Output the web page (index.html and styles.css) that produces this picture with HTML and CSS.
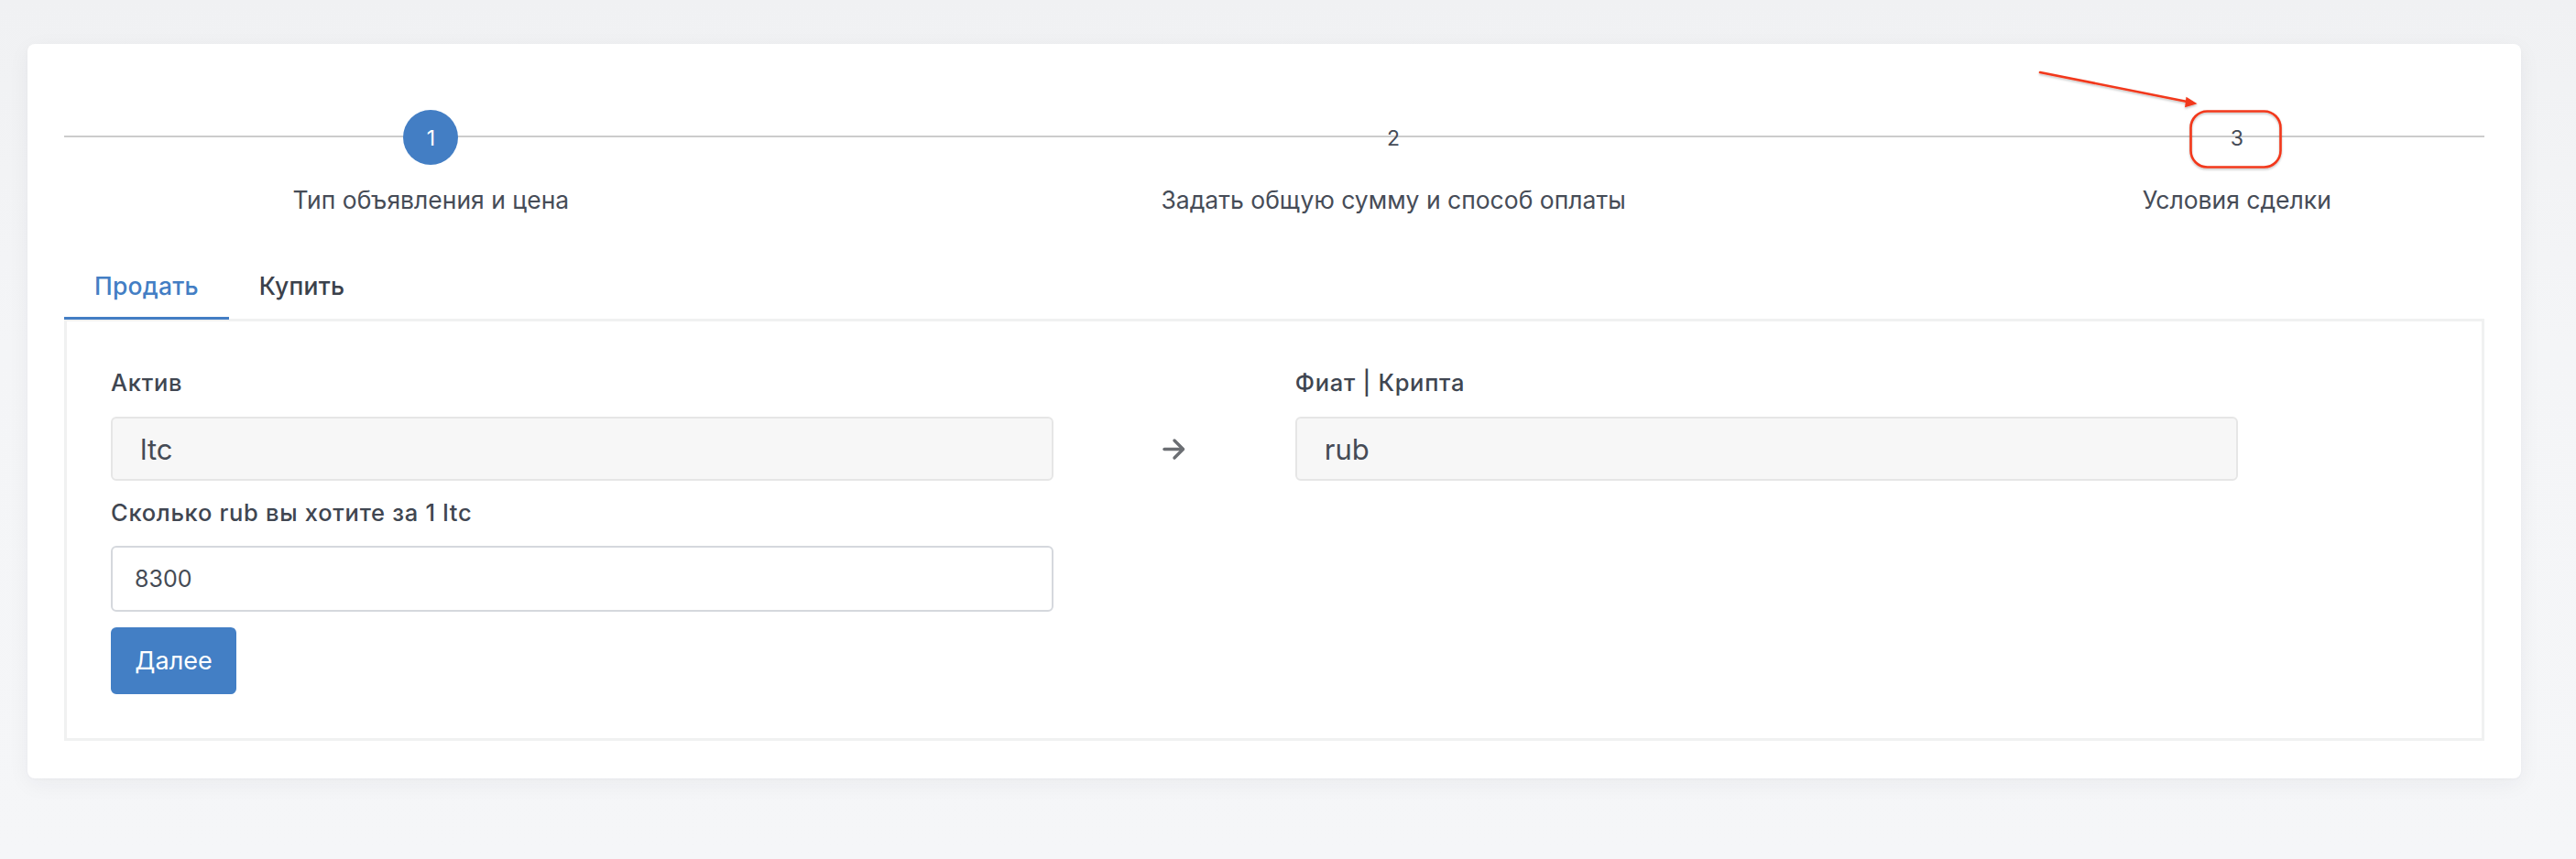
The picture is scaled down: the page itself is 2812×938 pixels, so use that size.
FILE: index.html
```html
<!DOCTYPE html>
<html lang="ru">
<head>
<meta charset="utf-8">
<title>Создание объявления</title>
<link rel="stylesheet" href="styles.css">
</head>
<body>
<div class="page">
  <div class="card">
    <div class="stepper">
      <div class="step active">
        <div class="step-num">1</div>
        <div class="step-label">Тип объявления и цена</div>
      </div>
      <div class="step">
        <div class="step-num">2</div>
        <div class="step-label">Задать общую сумму и способ оплаты</div>
      </div>
      <div class="step">
        <div class="step-num">3</div>
        <div class="step-label">Условия сделки</div>
      </div>
    </div>

    <div class="tabs">
      <div class="tab active">Продать</div>
      <div class="tab">Купить</div>
    </div>

    <div class="panel">
      <div class="form-grid">
        <div class="col">
          <div class="field-label">Актив</div>
          <div class="input readonly">ltc</div>
          <div class="field-label second">Сколько rub вы хотите за 1 ltc</div>
          <input class="input number" type="text" value="8300">
          <button class="btn" type="button">Далее</button>
        </div>
        <div class="arrow-col">
          <svg class="arrow-icon" width="26" height="25" viewBox="0 0 26 25" aria-hidden="true">
            <path d="M2 12.5 H22" stroke="#6b6e73" stroke-width="3.4" stroke-linecap="round" fill="none"/>
            <path d="M13 3 L22.5 12.5 L13 22" stroke="#6b6e73" stroke-width="3.4" stroke-linecap="round" stroke-linejoin="round" fill="none"/>
          </svg>
        </div>
        <div class="col">
          <div class="field-label">Фиат | Крипта</div>
          <div class="input readonly">rub</div>
        </div>
      </div>
    </div>
  </div>

  <svg class="annotation" width="2812" height="938" viewBox="0 0 2812 938" aria-hidden="true">
    <defs>
      <filter id="soft" x="-10%" y="-10%" width="120%" height="130%">
        <feDropShadow dx="0" dy="1.5" stdDeviation="1.2" flood-color="#000" flood-opacity="0.25"/>
      </filter>
    </defs>
    <g filter="url(#soft)">
      <line x1="2227" y1="79" x2="2390" y2="111.5" stroke="#f2381b" stroke-width="2.6" stroke-linecap="round"/>
      <path d="M2386.5 105.8 L2398.5 113.3 L2385 117.2 Z" fill="#f2381b"/>
      <rect x="2391.5" y="121.5" width="98" height="61" rx="18" ry="18" fill="none" stroke="#f2381b" stroke-width="2.6"/>
    </g>
  </svg>
</div>
</body>
</html>
```

FILE: styles.css
```css
* {
  box-sizing: border-box;
}

html, body {
  margin: 0;
  padding: 0;
}

body {
  width: 2812px;
  height: 938px;
  overflow: hidden;
  background: linear-gradient(180deg, #f0f1f3 0%, #f4f5f7 40%, #f5f6f8 100%);
  font-family: "Inter", "Noto Sans", sans-serif;
  color: #3f4550;
}

.page {
  position: relative;
  padding-top: 48px;
}

.card {
  margin: 0 60px 0 30px;
  background: #ffffff;
  border-radius: 8px;
  padding: 72px 40px 41px;
  box-shadow: 0 6px 24px rgba(30, 40, 60, 0.05), 0 1px 3px rgba(30, 40, 60, 0.03);
}

/* ---------- stepper ---------- */
.stepper {
  display: grid;
  grid-template-columns: 317fr 515fr 214fr;
  background-image: linear-gradient(#cccccc, #cccccc);
  background-repeat: no-repeat;
  background-size: 100% 2px;
  background-position: 0 28px;
}

.step {
  text-align: center;
  font-family: "Inter", "Noto Sans", sans-serif;
}

.step-num {
  width: 60px;
  height: 60px;
  margin: 0 auto;
  border-radius: 50%;
  display: flex;
  align-items: center;
  justify-content: center;
  font-size: 23px;
  color: #454b56;
  padding-top: 2px;
}

.step.active .step-num {
  background: #437ec4;
  color: #ffffff;
}

.step-label {
  margin-top: 19px;
  font-size: 26.5px;
  line-height: 39px;
  color: #464c57;
  white-space: nowrap;
}

/* ---------- tabs ---------- */
.tabs {
  display: flex;
  margin-top: 41px;
  position: relative;
  z-index: 1;
}

.tab {
  padding: 14px 33px 14px;
  font-size: 26.5px;
  line-height: 39px;
  font-weight: 500;
  letter-spacing: 0.2px;
  color: #3b414b;
  border-bottom: 3px solid transparent;
}

.tab.active {
  color: #437ec4;
  border-bottom-color: #437ec4;
}

/* ---------- panel ---------- */
.panel {
  margin-top: -1px;
  border: 3px solid #f0f1f1;
  padding: 48px;
}

.form-grid {
  display: grid;
  grid-template-columns: 40.5% 10.4% 40.5%;
}

.col {
  display: flex;
  flex-direction: column;
  align-items: flex-start;
}

.field-label {
  font-size: 25.5px;
  line-height: 37px;
  font-weight: 500;
  letter-spacing: 0.7px;
  color: #404651;
  margin-bottom: 19px;
}

.field-label.second {
  margin-top: 16px;
  margin-bottom: 18px;
}

.input {
  width: 100%;
  height: 70px;
  border: 2px solid #e6e6e6;
  border-radius: 6px;
  font-family: "Inter", "Noto Sans", sans-serif;
  color: #454b55;
}

.input.readonly {
  background: #f7f7f7;
  display: flex;
  align-items: center;
  padding: 0 30px;
  font-size: 31px;
}

.input.number {
  height: 72px;
  border-color: #d5d8dd;
  background: #ffffff;
  padding: 0 24px;
  font-size: 25px;
  outline: none;
  margin: 0;
}

.btn {
  margin-top: 17px;
  width: 137px;
  height: 73px;
  border: none;
  border-radius: 6px;
  background: #437fc5;
  color: #ffffff;
  font-family: "Inter", "Noto Sans", sans-serif;
  font-size: 27px;
  padding: 0;
  cursor: pointer;
}

.arrow-col {
  display: flex;
  justify-content: center;
  align-items: center;
  height: 70px;
  margin-top: 56px;
}

.arrow-icon {
  display: block;
}

/* ---------- annotation overlay ---------- */
.annotation {
  position: absolute;
  top: 0;
  left: 0;
  pointer-events: none;
}
```
